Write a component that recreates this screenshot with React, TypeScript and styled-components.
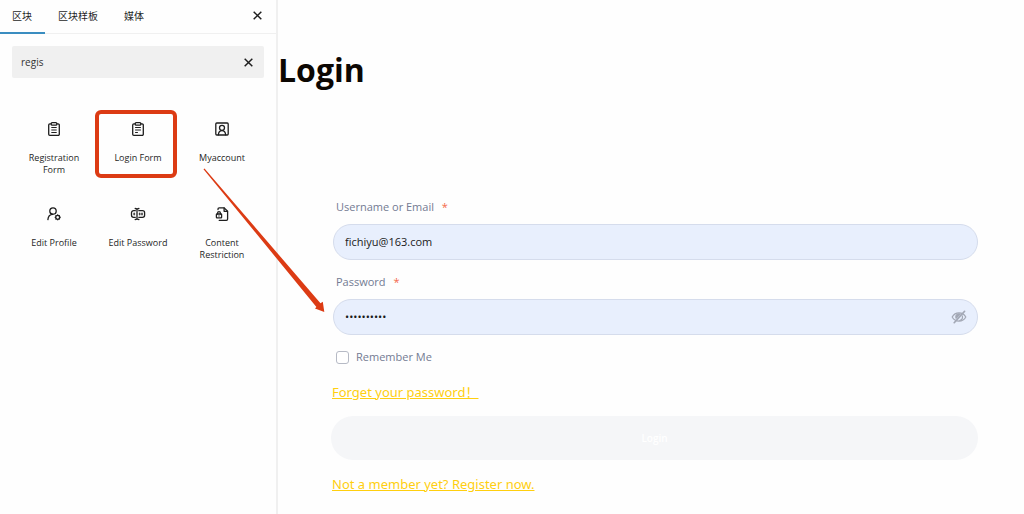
import React from "react";
import styled, { createGlobalStyle } from "styled-components";

const RED = "#dc3b14";

const GlobalStyle = createGlobalStyle`
  * { box-sizing: border-box; }
  body {
    margin: 0;
    background: #fff;
    font-family: "Open Sans", "Noto Sans CJK SC", sans-serif;
  }
  button, input { font-family: inherit; }
`;

const Page = styled.div`
  position: relative;
  display: flex;
  min-height: 100vh;
  overflow: hidden;
  background: #fefefe;
`;

const Sidebar = styled.aside`
  flex: 0 0 278px;
  border-right: 2px solid #f0f0f0;
  color: #1e1e1e;
`;

const TabBar = styled.div`
  display: flex;
  align-items: stretch;
  gap: 1px;
  height: 34px;
  border-bottom: 1px solid #f0f0f0;
`;

const Tab = styled.button<{ $active?: boolean }>`
  height: 34px;
  padding: 0 13px 0 12px;
  border: 0;
  border-bottom: 2px solid ${(p) => (p.$active ? "#3a8dc0" : "transparent")};
  background: none;
  color: #1e1e1e;
  font-size: 10px;
  line-height: 14px;
`;

const IconButton = styled.button`
  display: flex;
  align-items: center;
  justify-content: center;
  width: 16px;
  height: 16px;
  margin-left: auto;
  padding: 0;
  border: 0;
  background: none;
  color: #1e1e1e;
`;

const TabClose = styled(IconButton)`
  margin-top: 7px;
  margin-right: 11px;
`;

const SearchBox = styled.div`
  display: flex;
  align-items: center;
  height: 32px;
  margin: 12px 12px 0;
  padding: 0 8px 0 9px;
  border-radius: 2px;
  background: #f0f0f0;
`;

const SearchInput = styled.input`
  flex: 1;
  min-width: 0;
  padding: 0;
  border: 0;
  outline: 0;
  background: transparent;
  color: #333;
  font-size: 10px;
  line-height: 16px;
`;

const BlockGrid = styled.div`
  display: grid;
  grid-template-columns: repeat(3, 1fr);
  grid-auto-rows: 85px;
  margin: 33px 12px 0;
`;

const Block = styled.button`
  position: relative;
  display: flex;
  flex-direction: column;
  align-items: center;
  gap: 14px;
  padding: 9px 8px 0;
  border: 0;
  background: none;
  color: #1e1e1e;
  font-size: 9px;
  line-height: 12px;
`;

const Highlight = styled.span`
  position: absolute;
  inset: -1px 3px 18px -1px;
  border: 4px solid ${RED};
  border-radius: 6px;
`;

const Main = styled.main`
  flex: 1;
  min-width: 0;
`;

const Title = styled.h1`
  margin: 47px 0 0;
  color: #0c0703;
  font-size: 32px;
  line-height: 45px;
  font-weight: 700;
`;

const Form = styled.form`
  display: flex;
  flex-direction: column;
  margin: 106px 46px 0 55px;
`;

const Field = styled.div`
  display: flex;
  flex-direction: column;
  gap: 9px;
  margin-bottom: 13px;
`;

const Label = styled.label`
  padding-left: 3px;
  color: #737b93;
  font-size: 11px;
  line-height: 17px;
`;

const Required = styled.span`
  margin-left: 5px;
  color: #f4694c;
`;

const InputWrap = styled.div`
  position: relative;
`;

const TextInput = styled.input`
  display: block;
  width: 100%;
  height: 36px;
  padding: 0 40px 1px 11px;
  border: 1px solid #d5dcec;
  border-radius: 18px;
  outline: 0;
  background: #e8effd;
  color: #1a1a1a;
  font-size: 11px;
`;

const RevealButton = styled(IconButton)`
  position: absolute;
  top: 10px;
  right: 11px;
  color: #a3a8b5;
`;

const Remember = styled.label`
  display: flex;
  align-items: center;
  gap: 7px;
  padding-left: 3px;
  color: #737b93;
  font-size: 11px;
  line-height: 18px;
`;

const Checkbox = styled.input`
  appearance: none;
  width: 13px;
  height: 13px;
  margin: 0;
  border: 1px solid #b6bac5;
  border-radius: 3px;
  background: #fff;
`;

const TextLink = styled.a`
  align-self: flex-start;
  margin-left: -1px;
  color: #ffcf0f;
  font-family: "Noto Sans", "Noto Sans CJK SC", sans-serif;
  font-size: 13px;
  line-height: 20px;
  text-decoration: underline;
  white-space: pre;
`;

const Submit = styled.button`
  height: 44px;
  margin: 14px 0 14px -2px;
  border: 0;
  border-radius: 22px;
  background: #f5f6f8;
  color: #fff;
  font-size: 10px;
  font-weight: 600;
`;

const ForgotLink = styled(TextLink)`
  margin-top: 16px;
`;

const Arrow = styled.svg`
  position: absolute;
  top: 0;
  left: 0;
  pointer-events: none;
`;

const Icon = ({ children }: { children: React.ReactNode }) => (
  <svg width="18" height="18" viewBox="0 0 18 18" fill="none" stroke="#1e1e1e" strokeWidth="1.3" strokeLinecap="round" strokeLinejoin="round" aria-hidden="true">
    {children}
  </svg>
);

const Cross = () => (
  <svg width="9" height="9" viewBox="0 0 8 8" stroke="currentColor" strokeWidth="1.3" aria-hidden="true">
    <path d="M.6.6l6.8 6.8M7.400.6L.6 7.400" />
  </svg>
);

const clipboard = (
  <>
    <path d="M6.200 3.900H4.800a1.100 1.100 0 0 0-1.100 1.100v9.300a1.100 1.100 0 0 0 1.100 1.100h8.400a1.100 1.100 0 0 0 1.100-1.100V5a1.100 1.100 0 0 0-1.100-1.100h-1.400" />
    <rect x="6.200" y="2.600" width="5.600" height="2.600" rx=".9" />
  </>
);

const blocks = [
  { name: "Registration Form", icon: <>{clipboard}<path d="M6.700 7.500h4.600M6.700 10h4.600M6.700 12.500h4.600" strokeWidth="1" /></> },
  { name: "Login Form", icon: <>{clipboard}<path d="M6.500 7.500h5M6.500 10h5M6.500 12.500h2" strokeWidth="1" /></>, highlighted: true },
  {
    name: "Myaccount",
    icon: (
      <>
        <rect x="2.800" y="3" width="12.400" height="12" rx="1" />
        <circle cx="9" cy="7.800" r="2.500" />
        <path d="M5.400 14.800c.1-2.400 1.300-4.200 3.600-4.200s3.500 1.800 3.600 4.200" />
      </>
    ),
  },
  {
    name: "Edit Profile",
    icon: (
      <>
        <circle cx="8" cy="6" r="3.200" />
        <path d="M2.900 14.600c.2-3 1.900-5.200 4.900-5.300" />
        <circle cx="12.700" cy="12.300" r="2" />
        <path d="M12.700 9.600v.7M12.700 14.300v.7M10 12.300h.7M14.700 12.300h.7M10.800 10.400l.5.5M14.100 13.700l.5.5M14.600 10.400l-.5.5M11.300 13.700l-.5.5" strokeWidth=".9" />
      </>
    ),
  },
  {
    name: "Edit Password",
    icon: (
      <>
        <path d="M6.300 5.700H4.600A2.100 2.100 0 0 0 2.500 7.800v2.400a2.100 2.100 0 0 0 2.100 2.100h1.700M9.800 5.700h3.700a2.100 2.100 0 0 1 2.100 2.100v2.400a2.100 2.100 0 0 1-2.100 2.100H9.800" />
        <path d="M6.200 3.500c1.100 0 1.800.3 1.800 1.100v8.800c0 .8-.7 1.100-1.800 1.100M9.900 3.500C8.700 3.500 8 3.800 8 4.600M9.900 14.500C8.700 14.500 8 14.200 8 13.400" />
        <path d="M5.200 8v2M10.700 8v2M13 8v2M4.600 9h1.200M10.100 9h1.200M12.400 9h1.200" strokeWidth=".9" />
      </>
    ),
  },
  {
    name: "Content Restriction",
    icon: (
      <>
        <path d="M5 4.600V4.100c0-.7.5-1.200 1.200-1.200h5l3.400 3.300v7.900c0 .7-.5 1.200-1.200 1.200H6.200" />
        <path d="M11.100 3v3.300h3.400" />
        <rect x="3.400" y="9" width="5.200" height="3.900" rx=".6" />
        <path d="M4.600 9V8a1.400 1.400 0 0 1 2.800 0v1M6 10.800v.3" />
      </>
    ),
  },
];

const EyeOff = () => (
  <svg width="16" height="14" viewBox="0 0 16 14" fill="none" stroke="currentColor" strokeWidth="1.2" strokeLinecap="round" aria-hidden="true">
    <path d="M1.200 7C2.600 4.400 5 2.900 8 2.900s5.400 1.500 6.800 4.100C13.400 9.600 11 11.100 8 11.100S2.600 9.600 1.200 7z" />
    <path d="M8 3.200a3.700 3.700 0 0 0-3.100 6l5.200-5.300A3.700 3.700 0 0 0 8 3.200z" fill="currentColor" stroke="none" />
    <path d="M11.300 5.800c.6 2-.6 4-2.500 4.700" />
    <path d="M3.200 12.700L13.600 1.300" strokeWidth="1.700" />
  </svg>
);

export default function App() {
  return (
    <Page>
      <GlobalStyle />
      <Sidebar>
        <TabBar>
          <Tab type="button" $active>区块</Tab>
          <Tab type="button">区块样板</Tab>
          <Tab type="button">媒体</Tab>
          <TabClose type="button" aria-label="Close panel"><Cross /></TabClose>
        </TabBar>
        <SearchBox>
          <SearchInput type="text" aria-label="Search blocks" defaultValue="regis" />
          <IconButton type="button" aria-label="Clear search"><Cross /></IconButton>
        </SearchBox>
        <BlockGrid>
          {blocks.map((b) => (
            <Block type="button" key={b.name}>
              <Icon>{b.icon}</Icon>
              <span>{b.name}</span>
              {b.highlighted && <Highlight />}
            </Block>
          ))}
        </BlockGrid>
      </Sidebar>
      <Main>
        <Title>Login</Title>
        <Form onSubmit={(e) => e.preventDefault()}>
          <Field>
            <Label htmlFor="username">Username or Email <Required>*</Required></Label>
            <TextInput id="username" type="text" defaultValue="fichiyu@163.com" />
          </Field>
          <Field>
            <Label htmlFor="password">Password <Required>*</Required></Label>
            <InputWrap>
              <TextInput id="password" type="password" defaultValue="abcdefghij" />
              <RevealButton type="button" aria-label="Show password"><EyeOff /></RevealButton>
            </InputWrap>
          </Field>
          <Remember>
            <Checkbox type="checkbox" />
            Remember Me
          </Remember>
          <ForgotLink href="#forgot">Forget your password！</ForgotLink>
          <Submit type="submit">Login</Submit>
          <TextLink href="#register">Not a member yet? Register now.</TextLink>
        </Form>
      </Main>
      <Arrow width="340" height="330" viewBox="0 0 340 330" aria-hidden="true">
        <path d="M203.500 169.200L204.500 168.600L320.500 303.200L322.800 301.800L324.300 312L315 308.600L316.400 307Z" fill={RED} />
      </Arrow>
    </Page>
  );
}
